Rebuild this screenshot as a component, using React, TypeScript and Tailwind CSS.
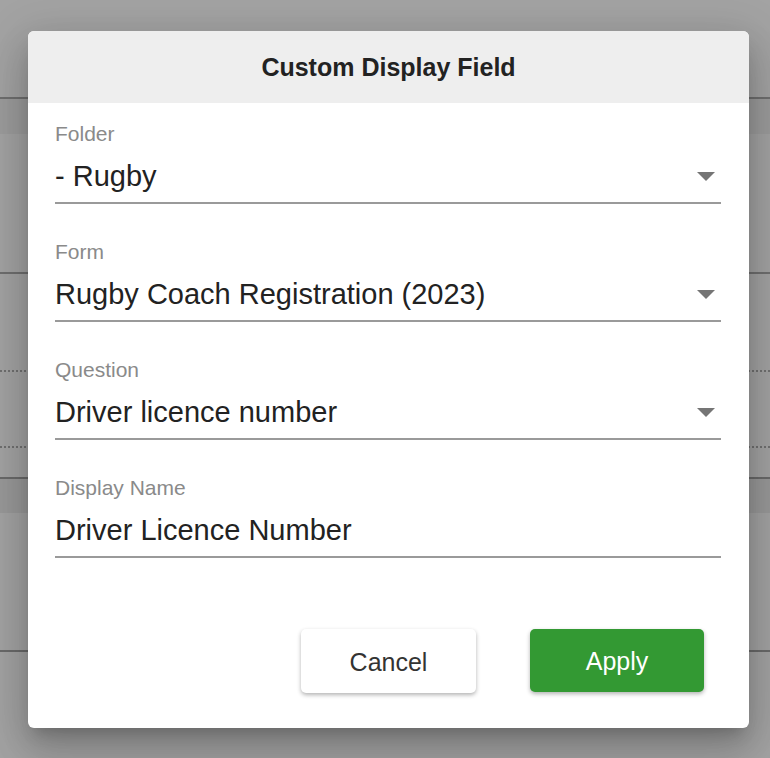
import React from "react";

// ─────────────────────────────────────────────────────────────────────────────
// Select / text field with underline
// ─────────────────────────────────────────────────────────────────────────────

function Field({ label, value, select }: { label: string; value: string; select?: boolean }) {
  return (
    <div className="mb-[36px]">
      <div className="h-[24px] text-[21px] leading-[24px] text-[#8a8a8a]">{label}</div>
      <div className="mt-[12px] box-content flex h-[36px] items-center justify-between border-b-2 border-[#9a9a9a] pb-[8px]">
        <span className="whitespace-nowrap text-[29px] leading-[36px] text-[#222]">{value}</span>
        {select && (
          <svg width="18" height="9" viewBox="0 0 18 9" className="mr-[6px] shrink-0">
            <polygon points="0,0 18,0 9,9" fill="#757575" />
          </svg>
        )}
      </div>
    </div>
  );
}

export default function App() {
  return (
    <div
      className="relative h-[758px] w-[770px] overflow-hidden bg-[#a3a3a3]"
      style={{ fontFamily: "'Liberation Sans', Arial, sans-serif" }}
    >
      {/* ── Page behind the overlay ─────────────────────────────────────── */}
      <div className="h-[99px] border-b-2 border-[#6f6f6f]" />
      <div className="h-[35px] bg-[#9c9c9c]" />
      <div className="h-[140px] border-b-2 border-[#6f6f6f]" />
      <div className="h-[98px] border-b-2 border-dotted border-[#707070]" />
      <div className="h-[76px] border-b-2 border-dotted border-[#707070]" />
      <div className="h-[31px] border-b-2 border-[#6a6a6a]" />
      <div className="h-[34px] bg-[#999]" />
      <div className="h-[139px] border-b-2 border-[#6a6a6a]" />

      {/* ── Dialog ──────────────────────────────────────────────────────── */}
      <div className="absolute left-[28px] top-[31px] flex h-[697px] w-[721px] flex-col rounded-[6px] bg-white shadow-[0_11px_15px_-7px_rgba(0,0,0,0.2),0_24px_38px_3px_rgba(0,0,0,0.14),0_9px_46px_8px_rgba(0,0,0,0.12)]">
        <div className="flex h-[72px] items-center justify-center rounded-t-[6px] bg-[#eeeeee] pt-[2px] text-[25px] font-bold text-[#222]">
          Custom Display Field
        </div>

        <div className="pl-[27px] pr-[28px] pt-[19px]">
          <Field label="Folder" value="- Rugby" select />
          <Field label="Form" value="Rugby Coach Registration (2023)" select />
          <Field label="Question" value="Driver licence number" select />
          <Field label="Display Name" value="Driver Licence Number" />
        </div>

        <div className="mt-auto flex justify-end gap-[54px] pb-[35px] pr-[45px]">
          <button className="h-[64px] w-[175px] rounded-[5px] bg-white pt-[3px] text-[25px] text-[#333] shadow-[0_2px_4px_rgba(0,0,0,0.3)]">
            Cancel
          </button>
          <button className="h-[63px] w-[174px] rounded-[5px] bg-[#339933] pt-[3px] text-[25px] text-white shadow-[0_2px_4px_rgba(0,0,0,0.3)]">
            Apply
          </button>
        </div>
      </div>
    </div>
  );
}
